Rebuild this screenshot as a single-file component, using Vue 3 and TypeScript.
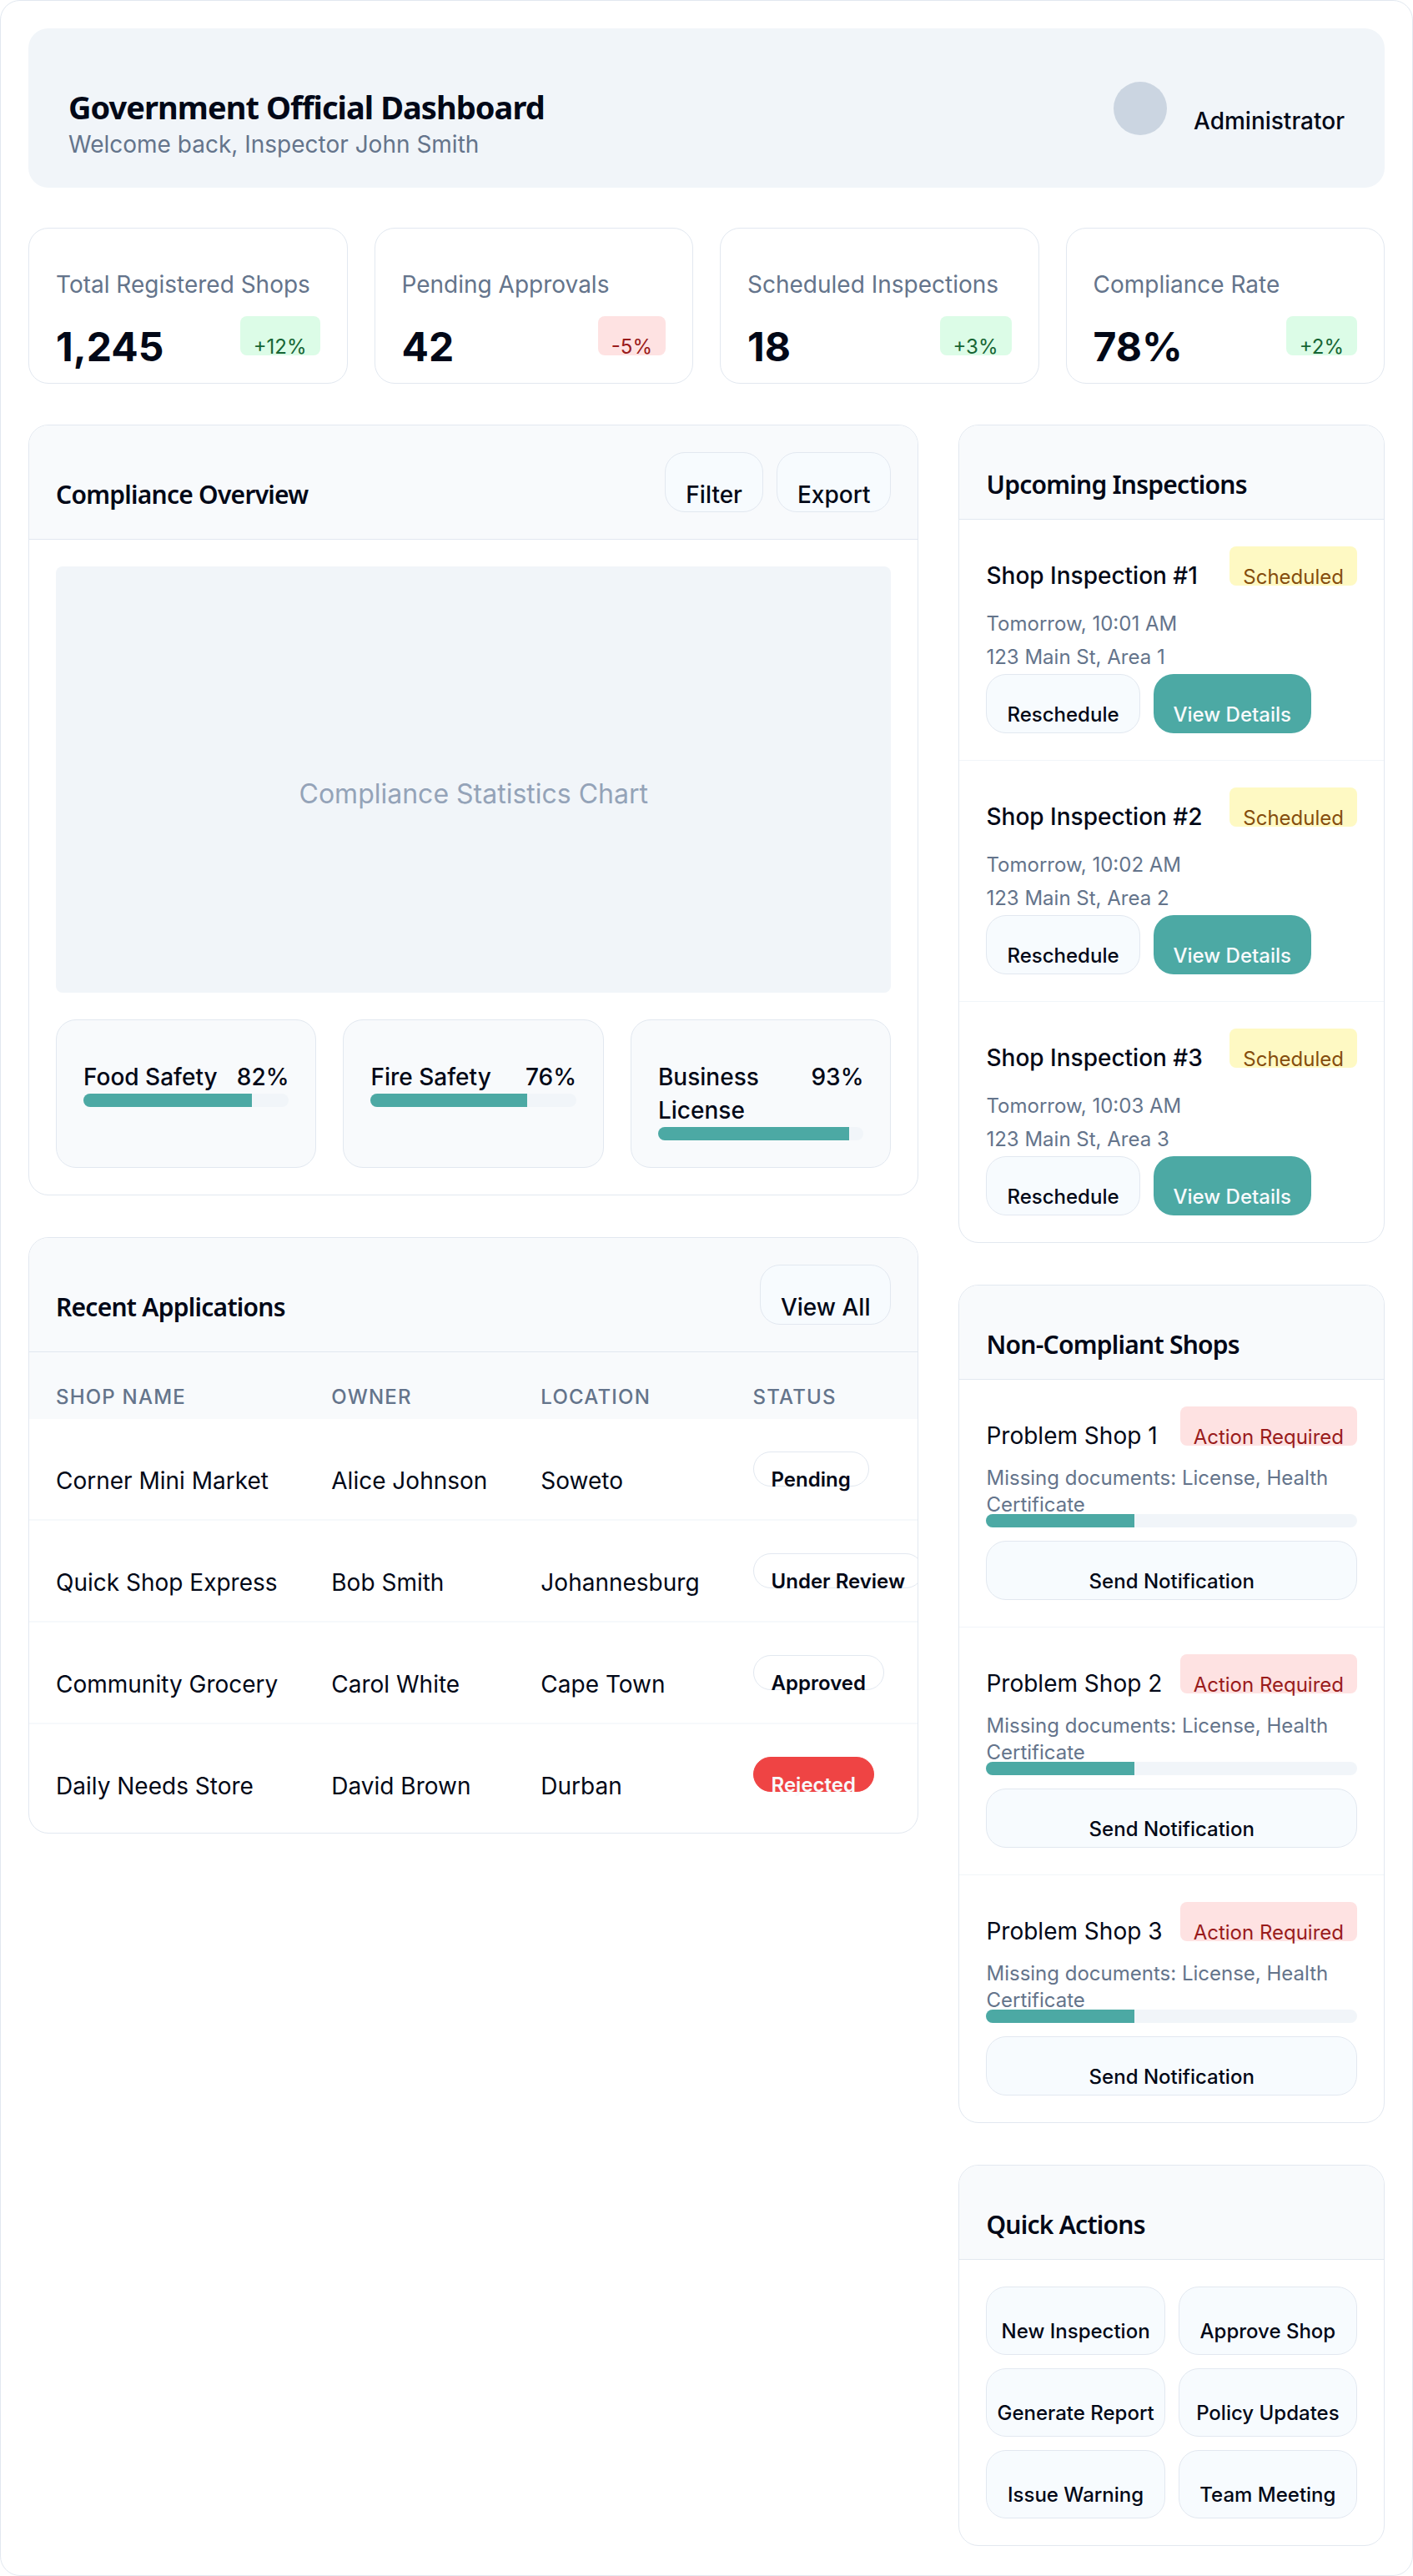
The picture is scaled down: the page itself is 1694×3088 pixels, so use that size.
<script setup lang="ts">
type Tone = 'good' | 'bad' | 'wait'

interface Stat {
  label: string
  value: string
  change: string
  tone: Tone
}

interface Application {
  shop: string
  owner: string
  location: string
  status: string
}

const stats: Stat[] = [
  { label: 'Total Registered Shops', value: '1,245', change: '+12%', tone: 'good' },
  { label: 'Pending Approvals', value: '42', change: '-5%', tone: 'bad' },
  { label: 'Scheduled Inspections', value: '18', change: '+3%', tone: 'good' },
  { label: 'Compliance Rate', value: '78%', change: '+2%', tone: 'good' },
]

const categories = [
  { name: 'Food Safety', percent: 82 },
  { name: 'Fire Safety', percent: 76 },
  { name: 'Business License', percent: 93 },
]

const applications: Application[] = [
  { shop: 'Corner Mini Market', owner: 'Alice Johnson', location: 'Soweto', status: 'Pending' },
  { shop: 'Quick Shop Express', owner: 'Bob Smith', location: 'Johannesburg', status: 'Under Review' },
  { shop: 'Community Grocery', owner: 'Carol White', location: 'Cape Town', status: 'Approved' },
  { shop: 'Daily Needs Store', owner: 'David Brown', location: 'Durban', status: 'Rejected' },
]

const inspections = [1, 2, 3]
const problemShops = [1, 2, 3]

const quickActions: string[] = [
  'New Inspection',
  'Approve Shop',
  'Generate Report',
  'Policy Updates',
  'Issue Warning',
  'Team Meeting',
]
</script>

<template>
  <main class="page">
    <header class="banner">
      <div class="banner-text">
        <h1>Government Official Dashboard</h1>
        <p>Welcome back, Inspector John Smith</p>
      </div>
      <div class="user">
        <span class="avatar"></span>
        <span class="user-name">Administrator</span>
      </div>
    </header>

    <section class="stats">
      <article v-for="stat in stats" :key="stat.label" class="stat">
        <p class="stat-label">{{ stat.label }}</p>
        <div class="stat-row">
          <strong>{{ stat.value }}</strong>
          <span class="tag" :class="stat.tone">{{ stat.change }}</span>
        </div>
      </article>
    </section>

    <div class="columns">
      <div class="stack">
        <section class="card">
          <div class="card-head">
            <h2>Compliance Overview</h2>
            <div class="actions">
              <button type="button" class="btn large">Filter</button>
              <button type="button" class="btn large">Export</button>
            </div>
          </div>
          <div class="card-body">
            <div class="chart"><span>Compliance Statistics Chart</span></div>
            <div class="categories">
              <div v-for="item in categories" :key="item.name" class="category">
                <div class="category-row">
                  <span>{{ item.name }}</span>
                  <span>{{ item.percent }}%</span>
                </div>
                <div class="bar"><div class="fill" :style="{ width: item.percent + '%' }"></div></div>
              </div>
            </div>
          </div>
        </section>

        <section class="card">
          <div class="card-head">
            <h2>Recent Applications</h2>
            <button type="button" class="btn large">View All</button>
          </div>
          <div class="table-wrap">
            <table>
              <thead>
                <tr>
                  <th scope="col">Shop Name</th>
                  <th scope="col">Owner</th>
                  <th scope="col">Location</th>
                  <th scope="col">Status</th>
                </tr>
              </thead>
              <tbody>
                <tr v-for="row in applications" :key="row.shop">
                  <td>{{ row.shop }}</td>
                  <td>{{ row.owner }}</td>
                  <td>{{ row.location }}</td>
                  <td class="status">
                    <span class="pill" :class="{ rejected: row.status === 'Rejected' }">{{ row.status }}</span>
                  </td>
                </tr>
              </tbody>
            </table>
          </div>
        </section>
      </div>

      <div class="stack">
        <section class="card">
          <div class="card-head"><h2>Upcoming Inspections</h2></div>
          <article v-for="n in inspections" :key="n" class="item">
            <div class="item-row">
              <h3>Shop Inspection #{{ n }}</h3>
              <span class="tag wait">Scheduled</span>
            </div>
            <div class="meta">
              <p>Tomorrow, 10:0{{ n }} AM</p>
              <p>123 Main St, Area {{ n }}</p>
            </div>
            <div class="actions">
              <button type="button" class="btn">Reschedule</button>
              <button type="button" class="btn primary">View Details</button>
            </div>
          </article>
        </section>

        <section class="card">
          <div class="card-head"><h2>Non-Compliant Shops</h2></div>
          <article v-for="n in problemShops" :key="n" class="item">
            <div class="item-row">
              <span class="shop-name">Problem Shop {{ n }}</span>
              <span class="tag bad">Action Required</span>
            </div>
            <p class="missing">Missing documents: License, Health Certificate</p>
            <div class="bar"><div class="fill" :style="{ width: '40%' }"></div></div>
            <button type="button" class="btn wide">Send Notification</button>
          </article>
        </section>

        <section class="card">
          <div class="card-head"><h2>Quick Actions</h2></div>
          <div class="card-body quick">
            <button v-for="action in quickActions" :key="action" type="button" class="btn tall">
              {{ action }}
            </button>
          </div>
        </section>
      </div>
    </div>
  </main>
</template>

<style>
body {
  background: #ffffff;
}
</style>

<style scoped>
* {
  box-sizing: border-box;
  margin: 0;
}

.page {
  --line: #e2e8f0;
  --soft: #f1f5f9;
  --tint: #f8fafc;
  --muted: #64748b;
  --teal: #4ca9a4;
  min-height: 100vh;
  padding: 33px;
  border: 1px solid var(--line);
  border-radius: 24px;
  background: #ffffff;
  color: #020817;
  font-family: Inter, "Liberation Sans", sans-serif;
  font-size: 28px;
  line-height: 40px;
}

h1,
h2 {
  font-family: "Noto Sans", "Open Sans", sans-serif;
  letter-spacing: -0.025em;
}

.banner {
  display: flex;
  justify-content: space-between;
  align-items: center;
  padding: 32px 48px;
  border-radius: 24px;
  background: var(--soft);
}

.banner-text {
  padding-top: 38px;
}

h1 {
  font-size: 38px;
  line-height: 49px;
  font-weight: 700;
}

.banner p {
  color: var(--muted);
}

.user {
  display: flex;
  align-items: center;
  gap: 32px;
}

.avatar {
  width: 64px;
  height: 64px;
  border-radius: 50%;
  background: #cbd5e1;
}

.user-name {
  padding-top: 30px;
  font-weight: 500;
}

.stats {
  display: grid;
  grid-template-columns: repeat(4, minmax(0, 1fr));
  gap: 32px;
  margin-top: 48px;
}

.stat {
  padding: 47px 32px 19px;
  border: 1px solid var(--line);
  border-radius: 24px;
}

.stat-label {
  color: var(--muted);
}

.stat-row {
  display: flex;
  justify-content: space-between;
  align-items: flex-start;
  margin-top: 18px;
}

.stat-row strong {
  padding-top: 13px;
  font-size: 48px;
  line-height: 48px;
  font-weight: 700;
}

.tag {
  height: 47px;
  padding: 25px 16px 0;
  border-radius: 8px;
  font-size: 24px;
  line-height: 24px;
  white-space: nowrap;
}

.good {
  background: #dcfce7;
  color: #166534;
}

.bad {
  background: #fee2e2;
  color: #991b1b;
}

.wait {
  background: #fef9c3;
  color: #854d0e;
}

.columns {
  display: grid;
  grid-template-columns: minmax(0, 23fr) minmax(0, 11fr);
  align-items: start;
  gap: 48px;
  margin-top: 49px;
}

.stack {
  display: flex;
  flex-direction: column;
  gap: 50px;
}

.card {
  overflow: hidden;
  border: 1px solid var(--line);
  border-radius: 24px;
}

.card-head {
  display: flex;
  justify-content: space-between;
  align-items: center;
  padding: 32px;
  border-bottom: 1px solid var(--line);
  background: var(--tint);
}

h2 {
  padding-top: 30px;
  font-size: 30px;
  line-height: 18px;
  font-weight: 600;
}

.card-body {
  padding: 32px;
}

.actions {
  display: flex;
  gap: 16px;
}

.btn {
  display: inline-flex;
  justify-content: center;
  align-items: center;
  height: 71px;
  padding: 26px 24px 0;
  border: 1px solid var(--line);
  border-radius: 24px;
  background: #f7fbfe;
  color: inherit;
  font-family: inherit;
  font-size: 24px;
  line-height: 32px;
  font-weight: 500;
  white-space: nowrap;
  cursor: pointer;
}

.btn.large {
  height: 72px;
  padding-top: 30px;
  font-size: 28px;
}

.btn.primary {
  border: 0;
  background: var(--teal);
  color: #f8fafc;
}

.btn.wide {
  width: 100%;
  margin-top: 16px;
}

.btn.tall {
  height: 82px;
  padding: 26px 8px 0;
}

.chart {
  display: flex;
  justify-content: center;
  align-items: center;
  height: 511px;
  padding-top: 34px;
  border-radius: 8px;
  background: var(--soft);
  color: #94a3b8;
  font-size: 32px;
}

.categories {
  display: grid;
  grid-template-columns: repeat(3, minmax(0, 1fr));
  gap: 32px;
  margin-top: 32px;
}

.category {
  padding: 48px 32px 32px;
  border: 1px solid var(--line);
  border-radius: 24px;
  background: var(--tint);
}

.category-row {
  display: flex;
  justify-content: space-between;
  font-weight: 500;
}

.bar {
  height: 16px;
  overflow: hidden;
  border-radius: 8px;
  background: var(--soft);
}

.fill {
  height: 100%;
  background: var(--teal);
}

.table-wrap {
  overflow: hidden;
  padding-bottom: 10px;
}

table {
  width: 100%;
  border-collapse: separate;
  border-spacing: 0;
  white-space: nowrap;
}

th {
  padding: 38px 32px 10px;
  background: var(--tint);
  color: var(--muted);
  font-size: 24px;
  line-height: 32px;
  font-weight: 500;
  letter-spacing: 0.05em;
  text-align: left;
  text-transform: uppercase;
}

td {
  padding: 54px 32px 26px;
  border-bottom: 2px solid #f6f9fb;
}

tbody tr:last-child td {
  border-bottom: 0;
}

td.status {
  padding-top: 39px;
  padding-bottom: 0;
  vertical-align: top;
}

.pill {
  display: flex;
  align-items: center;
  width: max-content;
  height: 42px;
  padding: 26px 21px 0;
  border: 1px solid var(--line);
  border-radius: 21px;
  font-size: 24px;
  line-height: 24px;
  font-weight: 600;
}

.pill.rejected {
  border-color: #ef4444;
  background: #ef4444;
  color: #f8fafc;
}

.item {
  padding: 32px;
  border-bottom: 1px solid var(--soft);
}

.item:last-child {
  border-bottom: 0;
}

.item-row {
  display: flex;
  justify-content: space-between;
  align-items: flex-start;
}

h3,
.shop-name {
  padding-top: 15px;
  font-size: 28px;
  font-weight: 500;
}

.shop-name {
  font-weight: 400;
}

.meta {
  padding-top: 18px;
  color: var(--muted);
  font-size: 24px;
}

.missing {
  margin-bottom: -5px;
  padding-top: 15px;
  color: var(--muted);
  font-size: 24px;
  line-height: 32px;
}

.quick {
  display: grid;
  grid-template-columns: repeat(2, minmax(0, 1fr));
  gap: 16px;
}
</style>
